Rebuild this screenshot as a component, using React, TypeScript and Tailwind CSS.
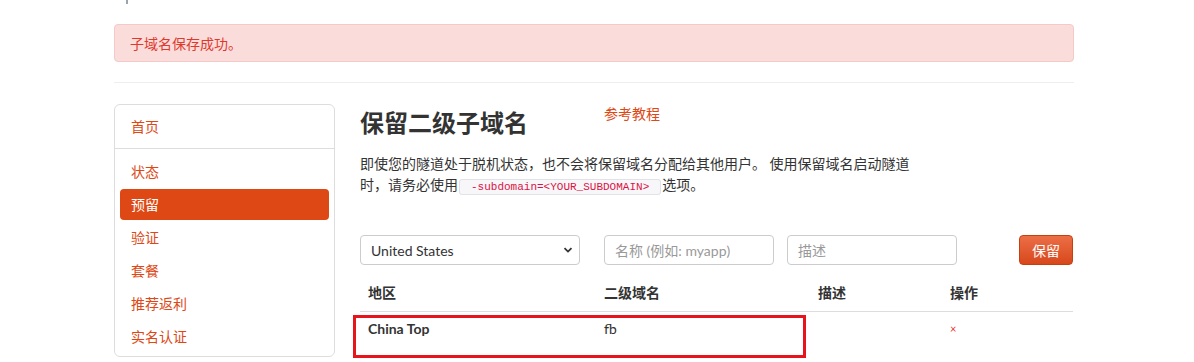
import React from 'react';

const FONT = 'font-["Lato","Noto_Sans_CJK_SC",sans-serif]';

const navItems = ['状态', '预留', '验证', '套餐', '推荐返利', '实名认证'];

function Sidebar() {
  return (
    <div className="w-[221px] shrink-0 self-start rounded-[6px] border border-[#dddddd] bg-white">
      <div className="border-b border-[#dddddd] px-[5px] pt-[6px] pb-[6px]">
        <a className="flex h-[31px] items-center pl-[11px] text-[14px] text-[#dd4814]">首页</a>
      </div>
      <ul className="flex flex-col gap-[2px] px-[5px] pt-[7px] pb-[4px]">
        {navItems.map((item) => (
          <li key={item}>
            <a
              className={
                item === '预留'
                  ? 'flex h-[31px] items-center rounded-[4px] bg-[#dd4814] pl-[11px] text-[14px] text-white'
                  : 'flex h-[31px] items-center pl-[11px] text-[14px] text-[#dd4814]'
              }
            >
              {item}
            </a>
          </li>
        ))}
      </ul>
    </div>
  );
}

function ReserveForm() {
  return (
    <div className="mt-[37px] flex items-center">
      <div className="relative w-[220px]">
        <select
          defaultValue="us"
          className="h-[30px] w-full appearance-none rounded-[4px] border border-[#cccccc] bg-white pl-[10px] text-[14px] text-[#333333] outline-none"
        >
          <option value="us">United States</option>
          <option value="cn">China Top</option>
        </select>
        <svg
          className="pointer-events-none absolute right-[7px] top-[11px] h-[8px] w-[10px]"
          viewBox="0 0 10 8"
          fill="none"
          stroke="#333"
          strokeWidth={1.8}
        >
          <path d="M1.5 2.2 5 5.6l3.5-3.4" />
        </svg>
      </div>
      <input
        placeholder="名称 (例如: myapp)"
        className="ml-[24px] h-[30px] w-[170px] rounded-[4px] border border-[#cccccc] px-[10px] text-[14px] text-[#333333] outline-none placeholder:text-[#999999]"
      />
      <input
        placeholder="描述"
        className="ml-[13px] h-[30px] w-[170px] rounded-[4px] border border-[#cccccc] px-[10px] text-[14px] text-[#333333] outline-none placeholder:text-[#999999]"
      />
      <button className="ml-[62px] h-[30px] w-[54px] rounded-[4px] border border-[#c4400f] bg-gradient-to-b from-[#ec6e45] to-[#d8471a] text-[14px] text-white">
        保留
      </button>
    </div>
  );
}

function ReservedTable() {
  return (
    <div className="relative mt-[10px] w-[713px]">
      <table className="w-full border-collapse text-left text-[14px] text-[#333333]">
        <thead>
          <tr className="border-b border-[#dddddd]">
            <th className="w-[236px] px-[8px] py-[8px] leading-[20px] font-bold">地区</th>
            <th className="w-[214px] px-[8px] py-[8px] leading-[20px] font-bold">二级域名</th>
            <th className="w-[132px] px-[8px] py-[8px] leading-[20px] font-bold">描述</th>
            <th className="px-[8px] py-[8px] leading-[20px] font-bold">操作</th>
          </tr>
        </thead>
        <tbody>
          <tr>
            <td className="px-[8px] pt-[6px] pb-[8px] leading-[20px] font-bold">China Top</td>
            <td className="px-[8px] pt-[6px] pb-[8px] leading-[20px]">fb</td>
            <td className="px-[8px] pt-[6px] pb-[8px] leading-[20px]"></td>
            <td className="px-[8px] pt-[6px] pb-[8px] leading-[20px]">
              <a className="text-[11px] text-[#df382c]">×</a>
            </td>
          </tr>
          <tr>
            <td className="h-[30px]" colSpan={4}></td>
          </tr>
        </tbody>
      </table>
      {/* highlight annotation */}
      <div className="pointer-events-none absolute left-[-7px] top-[40px] h-[43px] w-[453px] border-[3px] border-[#e8141c]" />
    </div>
  );
}

export default function App() {
  return (
    <div className={`${FONT} h-[362px] overflow-hidden bg-white text-[#333333]`}>
      <div className="ml-[114px] w-[960px]">
        <div className="ml-[12px] h-[4px] w-[2px] bg-[#9aa4b0]" />
        <div className="mt-[20px] flex h-[38px] items-center rounded-[4px] border border-[#f4c9c7] bg-[#fadcdb] pl-[15px] text-[14px] text-[#df382c]">
          子域名保存成功。
        </div>
        <hr className="mt-[20px] border-t border-[#eeeeee]" />

        <div className="mt-[21px] flex">
          <Sidebar />
          <div className="ml-[25px] w-[714px]">
            <div className="flex items-start">
              <h1 className="mt-[6px] w-[244px] text-[24px] leading-[26px] font-bold text-[#333333]">
                保留二级子域名
              </h1>
              <a className="text-[14px] leading-[20px] text-[#dd4814]">参考教程</a>
            </div>
            <p className="mt-[17px] text-[14px] leading-[21px] whitespace-nowrap text-[#333333]">
              即使您的隧道处于脱机状态，也不会将保留域名分配给其他用户。 使用保留域名启动隧道
              <br />
              时，请务必使用
              <code className="mx-[1px] rounded-[3px] border border-[#e1e1e8] bg-[#f7f7f9] px-[11px] py-[1px] font-['Liberation_Mono',monospace] text-[11px] text-[#dd1144]">
                -subdomain=&lt;YOUR_SUBDOMAIN&gt;
              </code>
              选项。
            </p>
            <ReserveForm />
            <ReservedTable />
          </div>
        </div>
      </div>
    </div>
  );
}
